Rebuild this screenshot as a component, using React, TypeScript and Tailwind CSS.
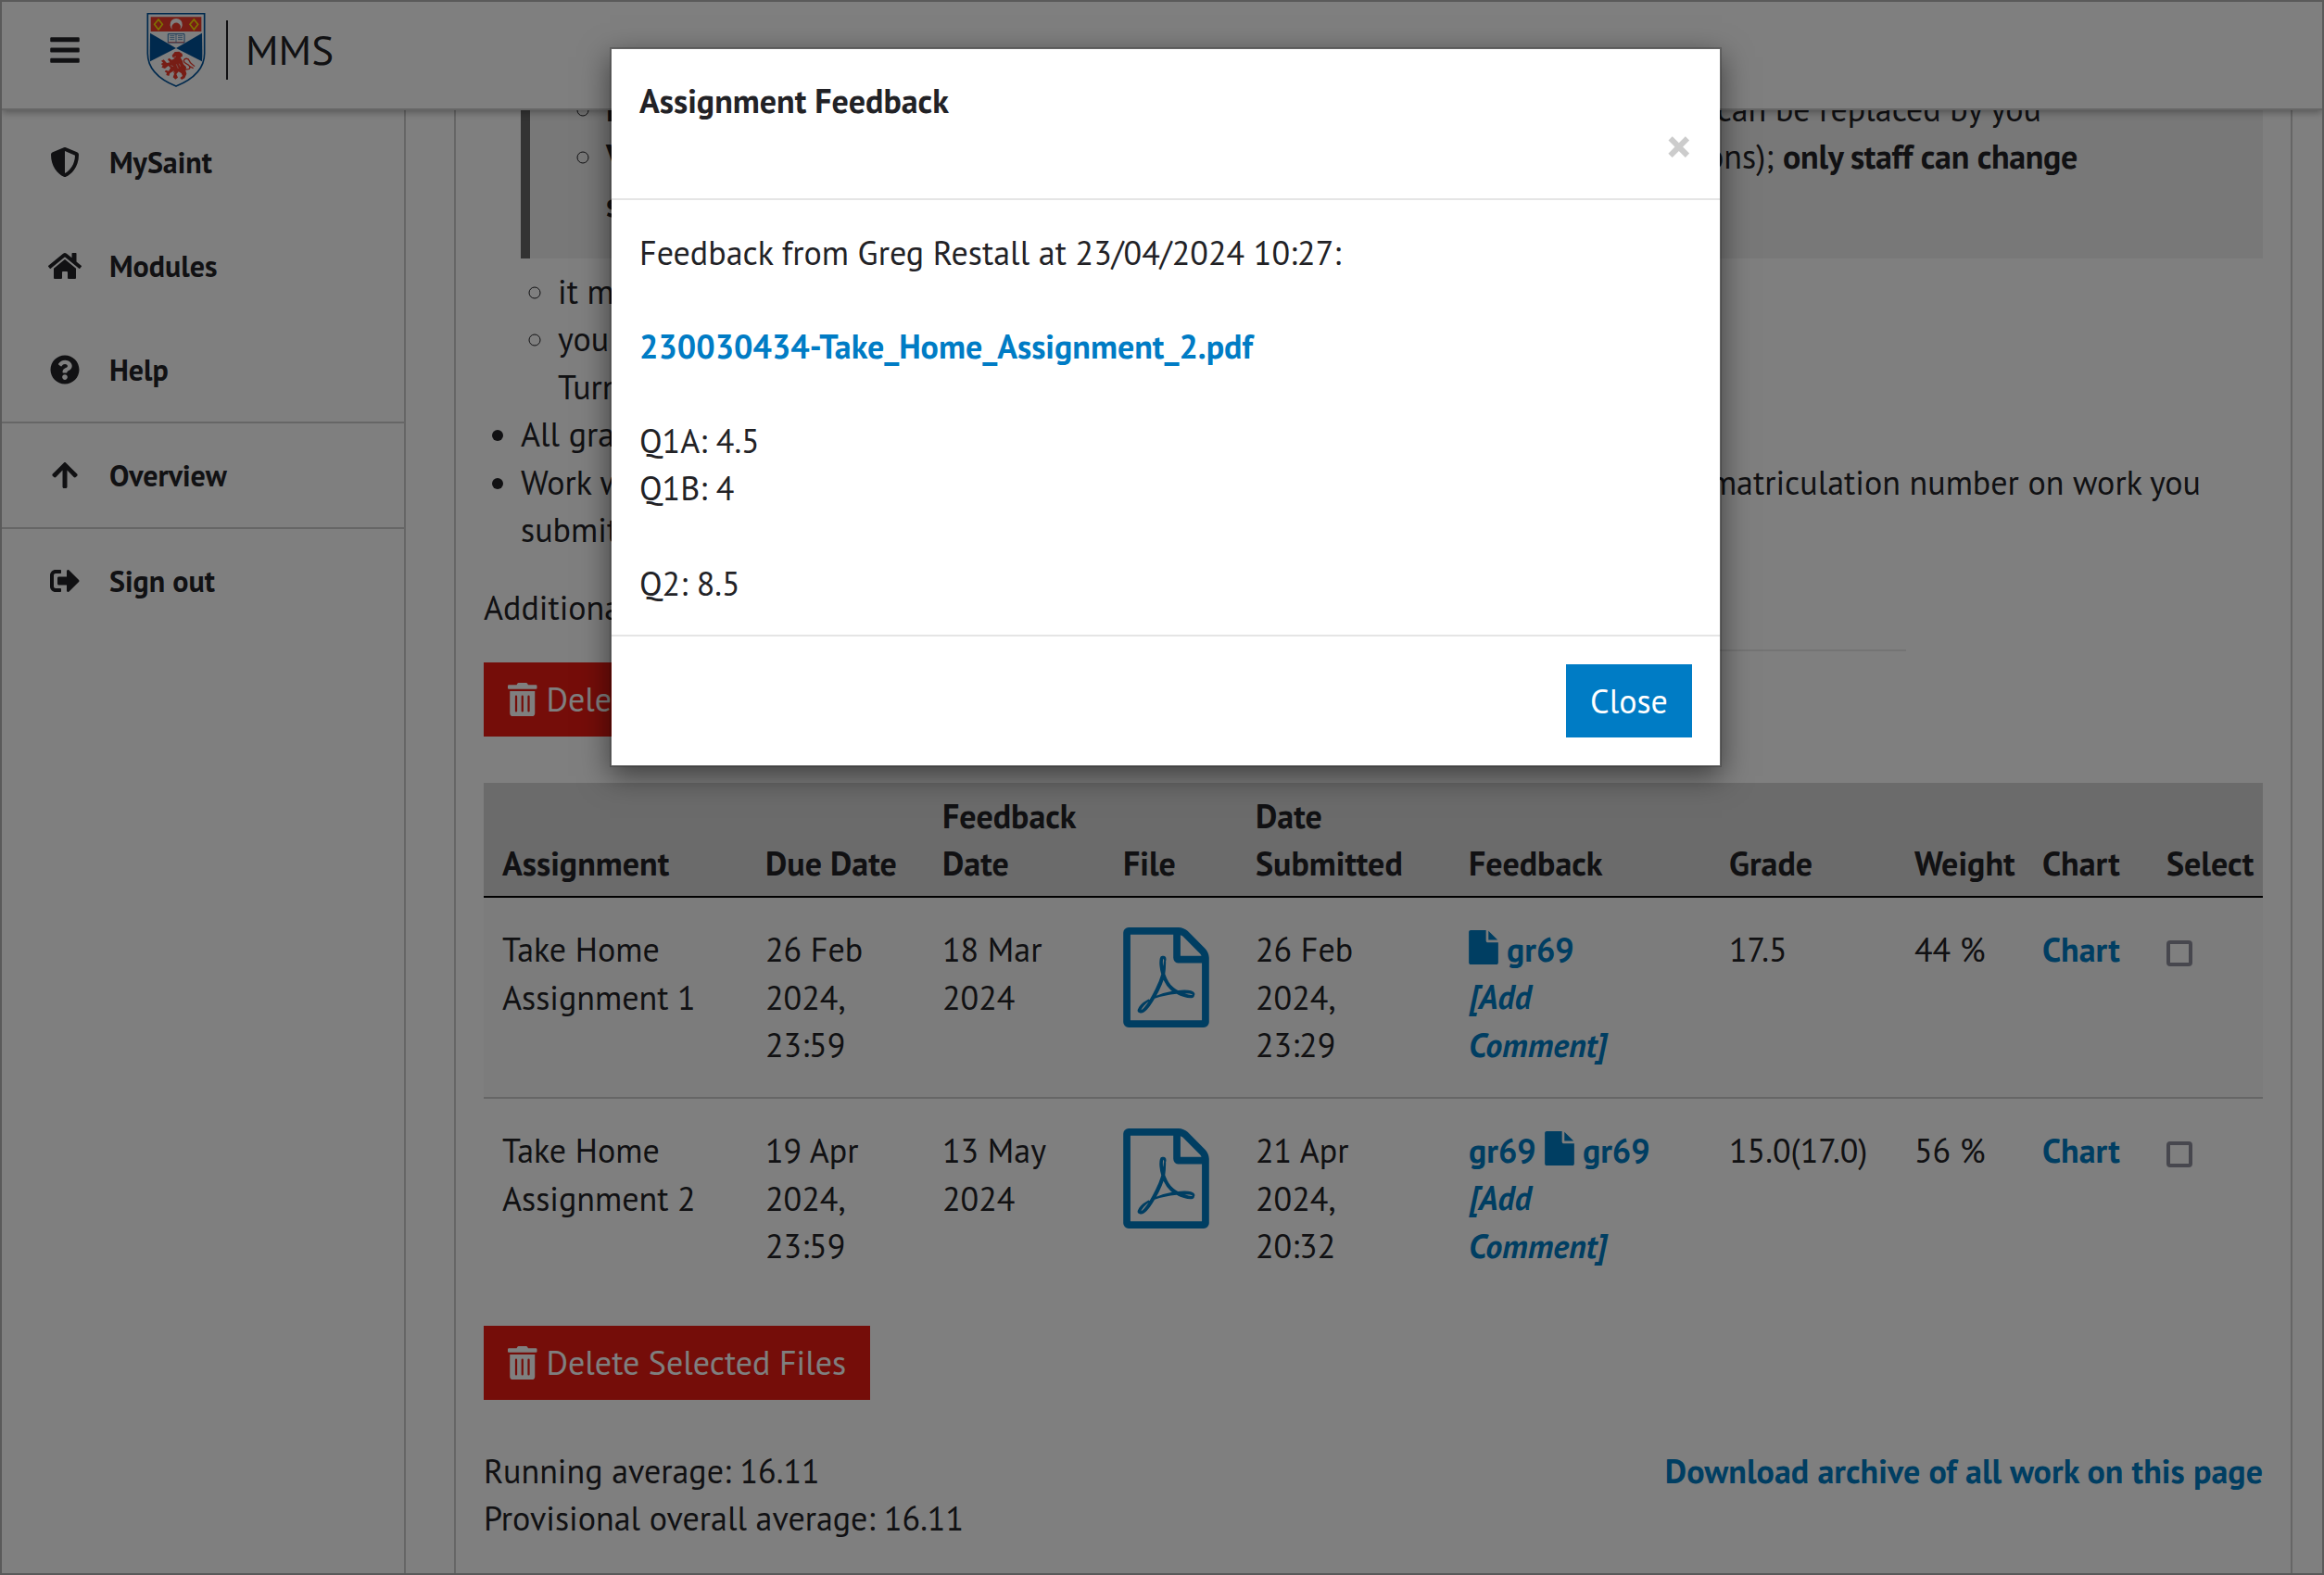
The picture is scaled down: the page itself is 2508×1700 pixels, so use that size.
import type { ReactNode } from 'react'
import {
  FaArrowUp,
  FaBars,
  FaHome,
  FaQuestionCircle,
  FaShieldAlt,
  FaSignOutAlt,
  FaTrashAlt,
} from 'react-icons/fa'

function PdfIcon() {
  return (
    <svg viewBox="0 0 1536 1792" className="block h-[108px] w-[93px]" fill="currentColor">
      <path d="M1468 380q28 28 48 76t20 88v1152q0 40-28 68t-68 28h-1344q-40 0-68-28t-28-68v-1600q0-40 28-68t68-28h896q40 0 88 20t76 48zm-444-244v376h376q-10-29-22-41l-313-313q-12-12-41-22zm384 1528v-1024h-416q-40 0-68-28t-28-68v-416h-768v1536h1280zm-514-593q33 26 84 56 59-7 117-7 147 0 177 49 16 22 2 52 0 1-1 2l-2 2v1q-6 38-71 38-48 0-115-20t-130-53q-221 24-392 83-153 262-242 262-15 0-28-7l-24-12q-1-1-6-5-10-10-6-36 9-40 56-91.5t132-96.5q14-9 23 6 2 2 2 4 52-85 107-197 68-136 104-262-24-82-30.5-159.5t6.5-127.5q11-40 42-40h22q23 0 35 15 18 21 9 68-2 6-4 8 1 3 1 8v30q-2 123-14 192 55 164 146 238zm-576 411q52-24 137-158-51 40-87.5 84t-49.5 74zm398-920q-15 42-2 132 1-7 7-44 0-3 7-43 1-4 4-8-1-1-1-2-1-2-1-3-1-22-13-36 0 1-1 2v2zm-124 661q135-54 284-81-2-1-13-9.5t-16-13.5q-76-67-127-176-27 86-83 197-30 56-45 83zm646-16q-24-24-140-24 76 28 124 28 14 0 18-1 0-1-2-3z" />
    </svg>
  )
}

function FileIcon() {
  return (
    <svg
      viewBox="0 0 1536 1792"
      className="mr-[9px] inline-block h-[37px] w-[32px] align-[-3px]"
      fill="currentColor"
    >
      <path d="M1024 512v-472q22 14 36 28l408 408q14 14 28 36h-472zm-128 32q0 40 28 68t68 28h544v1056q0 40-28 68t-68 28h-1344q-40 0-68-28t-28-68v-1600q0-40 28-68t68-28h800v544z" />
    </svg>
  )
}

function Crest() {
  return (
    <svg viewBox="55 41 190 240" className="block h-[80px] w-[64px]">
      <path d="M58 43H242V172C242 222 206 255 150 278C94 255 58 222 58 172Z" fill="#fff" stroke="#00539b" strokeWidth="5" />
      <path d="M68 54H232V101H68Z" fill="#ee3a2a" />
      <path d="M66 106L150 155L66 198C65 188 65 178 65 170Z" fill="#00539b" />
      <path d="M234 106L150 155L234 198C235 188 235 178 235 170Z" fill="#00539b" />
      <path d="M93 62L106 78L93 95L80 78Z" fill="none" stroke="#ffe600" strokeWidth="5" />
      <path d="M208 62L221 78L208 95L195 78Z" fill="none" stroke="#ffe600" strokeWidth="5" />
      <path d="M139 95A20 20 0 1 1 162 95A14 14 0 1 0 139 95Z" fill="#fff" />
      <path d="M124 109H177V137H124Z" fill="#fff" stroke="#00539b" strokeWidth="2.5" />
      <path d="M124 136H177" stroke="#ee3a2a" strokeWidth="2" />
      <path d="M150 110V136M130 115H145M130 121H145M130 127H145M156 115H171M156 121H171M156 127H171" stroke="#00539b" strokeWidth="1.8" />
      <path
        d="M137 178L146 167L160 166L170 173L171 181L164 185L170 195L174 207L183 216L181 228L184 238L178 252L168 257L163 251L171 245L167 236L158 231L151 239L156 250L148 256L140 249L144 238L140 230L130 236L127 245L118 242L120 235L113 231L117 226L126 229L132 219L125 212L114 221L103 217L107 211L101 206L108 202L102 196L110 192L120 203L130 201L123 192L127 187L136 193L146 188L139 185Z"
        fill="#ee3a2a"
      />
      <path d="M178 222C190 226 197 222 194 214C190 204 174 206 175 195C177 186 190 187 193 196C195 206 206 208 210 214M194 214L206 220" fill="none" stroke="#ee3a2a" strokeWidth="4" />
      <path d="M138 187L150 182M133 211L141 214M151 207L157 221M145 235L141 228M160 205L164 214" stroke="#fff" strokeWidth="1.6" />
    </svg>
  )
}

function NavItem({ icon, label }: { icon: ReactNode; label: string }) {
  return (
    <a className="flex h-[112px] items-center gap-[30px] pl-[50px] text-[32px] leading-[46px] font-bold">
      <span className="flex w-9 justify-center">{icon}</span>
      {label}
    </a>
  )
}

function DeleteButton() {
  return (
    <button className="flex h-[80px] w-[417px] items-center gap-[10px] bg-[#ea1b12] pl-[26px] text-white">
      <FaTrashAlt className="h-9 w-[31.5px]" />
      <span className="whitespace-nowrap">Delete Selected Files</span>
    </button>
  )
}

const link = 'font-bold text-[#007cc5]'

const columns = [
  { label: 'Assignment', width: 'w-[284px]' },
  { label: 'Due Date', width: 'w-[191px]' },
  { label: 'Feedback Date', width: 'w-[195px]' },
  { label: 'File', width: 'w-[143px]' },
  { label: 'Date Submitted', width: 'w-[230px]' },
  { label: 'Feedback', width: 'w-[281px]' },
  { label: 'Grade', width: 'w-[200px]' },
  { label: 'Weight', width: 'w-[138px]' },
  { label: 'Chart', width: 'w-[134px]' },
  { label: 'Select', width: 'w-[124px]' },
]

const rows = [
  {
    name: 'Take Home Assignment 1',
    due: '26 Feb 2024, 23:59',
    feedbackDate: '18 Mar 2024',
    submitted: '26 Feb 2024, 23:29',
    firstMarker: '',
    grade: '17.5',
    weight: '44 %',
    style: 'h-[217px] border-b-2 border-[#cccccc] bg-[#f9f9f9]',
  },
  {
    name: 'Take Home Assignment 2',
    due: '19 Apr 2024, 23:59',
    feedbackDate: '13 May 2024',
    submitted: '21 Apr 2024, 20:32',
    firstMarker: 'gr69',
    grade: '15.0(17.0)',
    weight: '56 %',
    style: 'h-[214px]',
  },
]

function AssignmentTable() {
  return (
    <table className="w-[1920px] table-fixed border-collapse">
      <thead>
        <tr className="border-b-2 border-black bg-[#d6d6d6]">
          {columns.map((c) => (
            <th
              key={c.label}
              className={`${c.width} py-[10px] pr-0 pl-5 text-left align-bottom leading-[51px] font-bold`}
            >
              {c.label}
            </th>
          ))}
        </tr>
      </thead>
      <tbody className="[&_td]:pt-[30px] [&_td]:pl-5 [&_td]:align-top">
        {rows.map((r) => (
          <tr key={r.name} className={r.style}>
            <td className="pr-5">{r.name}</td>
            <td className="pr-5">{r.due}</td>
            <td className="pr-5">{r.feedbackDate}</td>
            <td className={link}>
              <div className="pt-[2px]">
                <PdfIcon />
              </div>
            </td>
            <td className="pr-[50px]">{r.submitted}</td>
            <td className={link}>
              <div className="h-[51.43px] whitespace-nowrap">
                {r.firstMarker && <span>{r.firstMarker} </span>}
                <FileIcon />
                gr69
              </div>
              <i>
                [Add
                <br />
                Comment]
              </i>
            </td>
            <td>{r.grade}</td>
            <td>{r.weight}</td>
            <td className={link}>Chart</td>
            <td>
              <input
                type="checkbox"
                className="mt-[16px] block h-[28px] w-[28px] appearance-none rounded-[4px] border-4 border-[#8f8f9d] bg-white"
              />
            </td>
          </tr>
        ))}
      </tbody>
    </table>
  )
}

function Instructions() {
  return (
    <ul className="list-disc pl-[40px]">
      <li className="list-none">
        <blockquote className="-mt-[57px] h-[217px] border-l-[10px] border-[#666666] bg-[#f0f0f0] pt-[30px] pl-[42px]">
          <ul className="list-[circle] pl-[40px]">
            <li>
              <div className="flex w-[1549px] justify-between whitespace-nowrap">
                <b>Files</b>
                <span>can be replaced by you</span>
              </div>
            </li>
            <li>
              <div className="flex w-[1588px] justify-between whitespace-nowrap">
                <b>Versions</b>
                <span>
                  ons); <b className="tracking-[-0.33px]">only staff can change</b>
                </span>
              </div>
              <b>status</b>
            </li>
          </ul>
        </blockquote>
        <ul className="list-[circle] pt-[10px] pl-[40px]">
          <li>it must</li>
          <li>
            you
            <br />
            Turnitin
          </li>
        </ul>
      </li>
      <li>All grades</li>
      <li>
        <div className="flex w-[1813px] justify-between whitespace-nowrap">
          <span>Work with</span>
          <span>matriculation number on work you</span>
        </div>
        submit
      </li>
    </ul>
  )
}

function FeedbackModal() {
  return (
    <div className="absolute top-[49px] left-[656px] z-30 flex h-[777px] w-[1200px] flex-col border-2 border-black/20 bg-white bg-clip-padding shadow-[0_10px_30px_rgba(0,0,0,0.5)]">
      <div className="flex h-[163px] shrink-0 flex-col border-b-2 border-[#e5e5e5] px-[30px] pt-[30px]">
        <h4 className="font-bold">Assignment Feedback</h4>
        <button className="-mt-[4px] self-end text-[54px] leading-[54px] font-bold text-[#cccccc]">×</button>
      </div>
      <div className="flex-1 px-[30px] pt-[31px] leading-[51px]">
        <p className="tracking-[0.02px]">Feedback from Greg Restall at 23/04/2024 10:27:</p>
        <p className={`mt-[50px] ${link}`}>230030434-Take_Home_Assignment_2.pdf</p>
        <p className="mt-[51px]">Q1A: 4.5</p>
        <p>Q1B: 4</p>
        <p className="mt-[52px]">Q2: 8.5</p>
      </div>
      <div className="flex h-[141px] shrink-0 items-start justify-end border-t-2 border-[#e5e5e5] p-[30px]">
        <button className="h-[79px] w-[136px] bg-[#007cc5] text-white">Close</button>
      </div>
    </div>
  )
}

export default function App() {
  return (
    <div className="relative flex h-[1700px] w-[2508px] flex-col overflow-hidden border-2 border-[#5a5a5a] bg-white font-['PT_Sans','Noto_Sans',sans-serif] text-[36px] leading-[51.43px] text-[#222226]">
      <header className="relative z-10 flex h-[117px] shrink-0 items-start border-b-2 border-[#cccccc] bg-white pl-[52px] shadow-[0_2px_8px_rgba(0,0,0,0.35)]">
        <FaBars className="mt-[34px] h-9 w-[32px]" />
        <div className="mt-[12px] ml-[72px]">
          <Crest />
        </div>
        <div className="mt-[20px] ml-[22px] h-16 w-[2px] bg-[#222226]" />
        <span className="mt-[25px] ml-[19px] text-[45px] leading-[52px]">MMS</span>
      </header>

      <div className="flex flex-1">
        <nav className="w-[436px] shrink-0 border-r-2 border-[#cccccc]">
          <NavItem icon={<FaShieldAlt className="h-8 w-8" />} label="MySaint" />
          <NavItem icon={<FaHome className="h-8 w-9" />} label="Modules" />
          <NavItem icon={<FaQuestionCircle className="h-8 w-8" />} label="Help" />
          <div className="border-y-2 border-[#cccccc]">
            <NavItem icon={<FaArrowUp className="h-8 w-[28px]" />} label="Overview" />
          </div>
          <NavItem icon={<FaSignOutAlt className="h-8 w-8" />} label="Sign out" />
        </nav>

        <main className="ml-[52px] w-[1984px] shrink-0 border-x-2 border-[#cccccc] px-[30px]">
          <Instructions />
          <p className="mt-[32px]">Additional</p>
          <hr className="mx-auto mt-[20px] h-[2px] w-[1150px] border-0 bg-[#e9e9e9]" />
          <div className="mt-[12px] mb-[50px]">
            <DeleteButton />
          </div>
          <AssignmentTable />
          <div className="mt-[32px] mb-[51px]">
            <DeleteButton />
          </div>
          <div className="flex items-start justify-between leading-[51px]">
            <p>
              Running average: 16.11
              <br />
              Provisional overall average: 16.11
            </p>
            <a className={`tracking-[0.04px] ${link}`}>Download archive of all work on this page</a>
          </div>
        </main>
      </div>

      <div className="absolute inset-0 z-20 bg-black/50" />
      <FeedbackModal />
    </div>
  )
}
